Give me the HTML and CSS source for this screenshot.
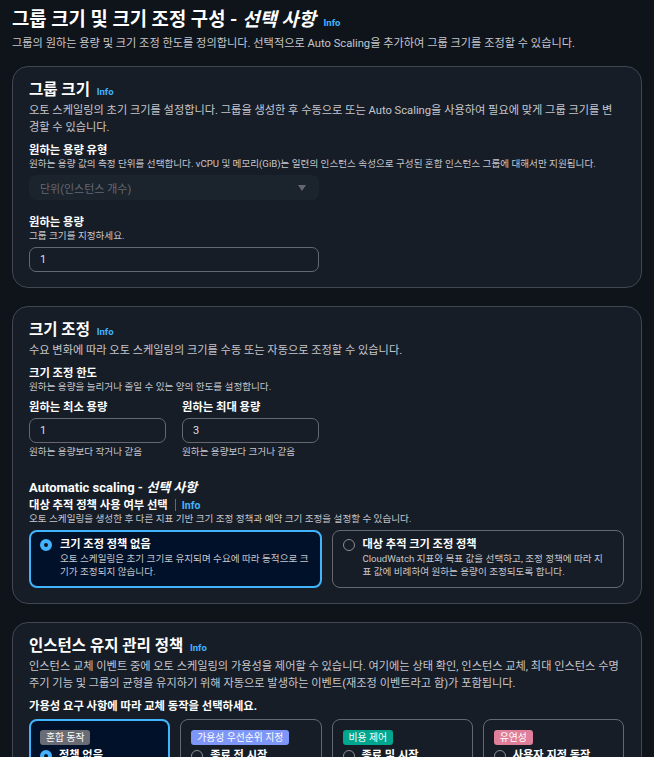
FILE: index.html
```html
<!DOCTYPE html>
<html lang="ko">
<head>
  <meta charset="UTF-8" />
  <meta name="viewport" content="width=device-width, initial-scale=1" />
  <title>그룹 크기 및 크기 조정 구성</title>
  <link rel="stylesheet" href="styles.css">
</head>
<body>
  <div class="page">
    <div class="page-head">
      <h1>그룹 크기 및 크기 조정 구성 - <i>선택 사항</i> <a href="#" class="info">Info</a></h1>
      <p class="lead">그룹의 원하는 용량 및 크기 조정 한도를 정의합니다. 선택적으로 Auto Scaling을 추가하여 그룹 크기를 조정할 수 있습니다.</p>
    </div>

    <section class="panel">
      <h2>그룹 크기 <a href="#" class="info">Info</a></h2>
      <p class="desc">오토 스케일링의 초기 크기를 설정합니다. 그룹을 생성한 후 수동으로 또는 Auto Scaling을 사용하여 필요에 맞게 그룹 크기를 변경할 수 있습니다.</p>

      <div class="field">
        <div class="label">원하는 용량 유형</div>
        <div class="hint">원하는 용량 값의 측정 단위를 선택합니다. vCPU 및 메모리(GiB)는 일련의 인스턴스 속성으로 구성된 혼합 인스턴스 그룹에 대해서만 지원됩니다.</div>
        <div class="select">단위(인스턴스 개수)<span class="caret"></span></div>
      </div>

      <div class="field">
        <div class="label">원하는 용량</div>
        <div class="hint">그룹 크기를 지정하세요.</div>
        <input class="input" type="text" value="1">
      </div>
    </section>

    <section class="panel">
      <h2>크기 조정 <a href="#" class="info">Info</a></h2>
      <p class="desc">수요 변화에 따라 오토 스케일링의 크기를 수동 또는 자동으로 조정할 수 있습니다.</p>

      <div class="field">
        <div class="label">크기 조정 한도</div>
        <div class="hint">원하는 용량을 늘리거나 줄일 수 있는 양의 한도를 설정합니다.</div>
      </div>

      <div class="limits">
        <div>
          <div class="label">원하는 최소 용량</div>
          <input class="input" type="text" value="1">
          <div class="hint">원하는 용량보다 작거나 같음</div>
        </div>
        <div>
          <div class="label">원하는 최대 용량</div>
          <input class="input" type="text" value="3">
          <div class="hint">원하는 용량보다 크거나 같음</div>
        </div>
      </div>

      <div class="sub-head">Automatic scaling - <i>선택 사항</i></div>
      <div class="label">대상 추적 정책 사용 여부 선택<span class="sep"></span><a href="#" class="info">Info</a></div>
      <div class="hint">오토 스케일링을 생성한 후 다른 지표 기반 크기 조정 정책과 예약 크기 조정을 설정할 수 있습니다.</div>

      <div class="tiles">
        <div class="tile selected">
          <span class="radio"></span>
          <div>
            <div class="tile-title">크기 조정 정책 없음</div>
            <div class="tile-desc">오토 스케일링은 초기 크기로 유지되며 수요에 따라 동적으로 크기가 조정되지 않습니다.</div>
          </div>
        </div>
        <div class="tile">
          <span class="radio"></span>
          <div>
            <div class="tile-title">대상 추적 크기 조정 정책</div>
            <div class="tile-desc">CloudWatch 지표와 목표 값을 선택하고, 조정 정책에 따라 지표 값에 비례하여 원하는 용량이 조정되도록 합니다.</div>
          </div>
        </div>
      </div>
    </section>

    <section class="panel">
      <h2>인스턴스 유지 관리 정책 <a href="#" class="info">Info</a></h2>
      <p class="desc">인스턴스 교체 이벤트 중에 오토 스케일링의 가용성을 제어할 수 있습니다. 여기에는 상태 확인, 인스턴스 교체, 최대 인스턴스 수명 주기 기능 및 그룹의 균형을 유지하기 위해 자동으로 발생하는 이벤트(재조정 이벤트라고 함)가 포함됩니다.</p>

      <div class="field">
        <div class="label">가용성 요구 사항에 따라 교체 동작을 선택하세요.</div>
      </div>

      <div class="policies">
        <div class="policy selected">
          <span class="badge grey">혼합 동작</span>
          <div class="option"><span class="radio"></span>정책 없음</div>
        </div>
        <div class="policy">
          <span class="badge blue">가용성 우선순위 지정</span>
          <div class="option"><span class="radio"></span>종료 전 시작</div>
        </div>
        <div class="policy">
          <span class="badge teal">비용 제어</span>
          <div class="option"><span class="radio"></span>종료 및 시작</div>
        </div>
        <div class="policy">
          <span class="badge pink">유연성</span>
          <div class="option"><span class="radio"></span>사용자 지정 동작</div>
        </div>
      </div>
    </section>
  </div>
</body>
</html>
```

FILE: styles.css
```css
:root {
  --page-bg: #0f141a;
  --panel-bg: #161d26;
  --panel-border: #424650;
  --text: #c6c6cd;
  --heading: #ffffff;
  --muted: #656871;
  --accent: #42b4ff;
  --selected-bg: #001129;
}

body {
  margin: 0;
  background: var(--page-bg);
  color: var(--text);
  font-family: Roboto, "Noto Sans CJK KR", sans-serif;
}

.page {
  padding: 8px 12px 24px;
}

h1 {
  margin: 0;
  font-size: 18.8px;
  line-height: 24px;
  font-weight: 700;
  color: var(--heading);
}

.info {
  margin-left: 3px;
  font-size: 9.5px;
  line-height: 1;
  font-weight: 700;
  color: var(--accent);
  text-decoration: none;
}

.lead {
  margin: 4px 0 0;
  font-size: 11.2px;
  line-height: 16px;
}

.panel {
  margin-top: 18px;
  background: var(--panel-bg);
  border: 1px solid var(--panel-border);
  border-radius: 16px;
  padding: 13px 17px 15px 16px;
}
.page-head + .panel {
  margin-top: 14px;
}

h2 {
  margin: 0;
  font-size: 15.5px;
  line-height: 20px;
  font-weight: 700;
  color: var(--heading);
}

.desc {
  max-width: 590px;
  margin: 2px 0 0;
  font-size: 11.2px;
  line-height: 17px;
}

.field {
  margin-top: 8px;
}
.field + .field {
  margin-top: 16px;
}

.label {
  font-size: 11.3px;
  line-height: 14px;
  font-weight: 700;
  color: var(--heading);
}

.label .sep {
  display: inline-block;
  width: 1px;
  height: 12px;
  margin: 0 6px 0 7px;
  background: #5f6b7a;
  vertical-align: -2px;
}
.label .info {
  margin-left: 0;
  font-size: 10.5px;
}

.hint {
  font-size: 9.6px;
  line-height: 12px;
}

.select {
  margin-top: 5px;
  width: 290px;
  height: 25px;
  box-sizing: border-box;
  padding: 0 13px 0 11px;
  display: flex;
  align-items: center;
  justify-content: space-between;
  background: #1b232d;
  border-radius: 7px;
  color: var(--muted);
  font-size: 11px;
}

.caret {
  border-left: 4px solid transparent;
  border-right: 4px solid transparent;
  border-top: 6px solid var(--muted);
}

.input {
  display: block;
  margin: 5px 0 0;
  width: 290px;
  height: 25px;
  box-sizing: border-box;
  padding: 0 10px;
  background: transparent;
  border: 1px solid var(--muted);
  border-radius: 7px;
  color: #dedee3;
  font: inherit;
  font-size: 11px;
  outline: none;
}

.limits {
  display: grid;
  grid-template-columns: 137px 137px;
  column-gap: 16px;
  margin-top: 8px;
}
.limits .input {
  width: 100%;
  margin-top: 3px;
}
.limits .hint {
  margin-top: 3px;
}

.sub-head {
  margin-top: 21px;
  margin-bottom: 2px;
  font-size: 13px;
  line-height: 18px;
  font-weight: 700;
  color: var(--heading);
}

.tiles {
  display: grid;
  grid-template-columns: 1fr 1fr;
  gap: 10px;
  margin-top: 5px;
}

.tile {
  display: flex;
  gap: 8px;
  align-items: flex-start;
  padding: 7px 13px 9px 10px;
  border: 1px solid var(--muted);
  border-radius: 8px;
}
.tile.selected {
  padding: 6px 8px 8px 9px;
  border: 2px solid var(--accent);
  background: var(--selected-bg);
}

.radio {
  flex: none;
  width: 12px;
  height: 12px;
  box-sizing: border-box;
  margin-top: 1px;
  border: 1px solid #8c8c94;
  border-radius: 50%;
}
.selected .radio {
  border: 4px solid var(--accent);
  background: var(--page-bg);
}

.tile-title {
  font-size: 11.2px;
  line-height: 14px;
  font-weight: 700;
  color: var(--heading);
}

.tile-desc {
  font-size: 9.6px;
  line-height: 13px;
}

.policies {
  display: grid;
  grid-template-columns: repeat(4, 1fr);
  gap: 10px;
  margin-top: 5px;
}

.policy {
  padding: 6px 9px 12px 10px;
  border: 1px solid var(--muted);
  border-radius: 8px;
}
.policy.selected {
  padding: 5px 8px 11px 9px;
  border: 2px solid var(--accent);
  background: var(--selected-bg);
}

.badge {
  display: inline-block;
  padding: 0 6px;
  border-radius: 3px;
  font-size: 9.8px;
  line-height: 15px;
  color: #ffffff;
}
.badge.grey { background: #696c74; }
.badge.blue { background: #7d96f8; }
.badge.teal { background: #00a78e; }
.badge.pink { background: #df7f99; }

.option {
  display: flex;
  align-items: center;
  gap: 7px;
  margin-top: 4px;
  font-size: 11.2px;
  line-height: 14px;
  font-weight: 700;
  color: var(--heading);
}
.option .radio {
  margin-top: 0;
}
```
